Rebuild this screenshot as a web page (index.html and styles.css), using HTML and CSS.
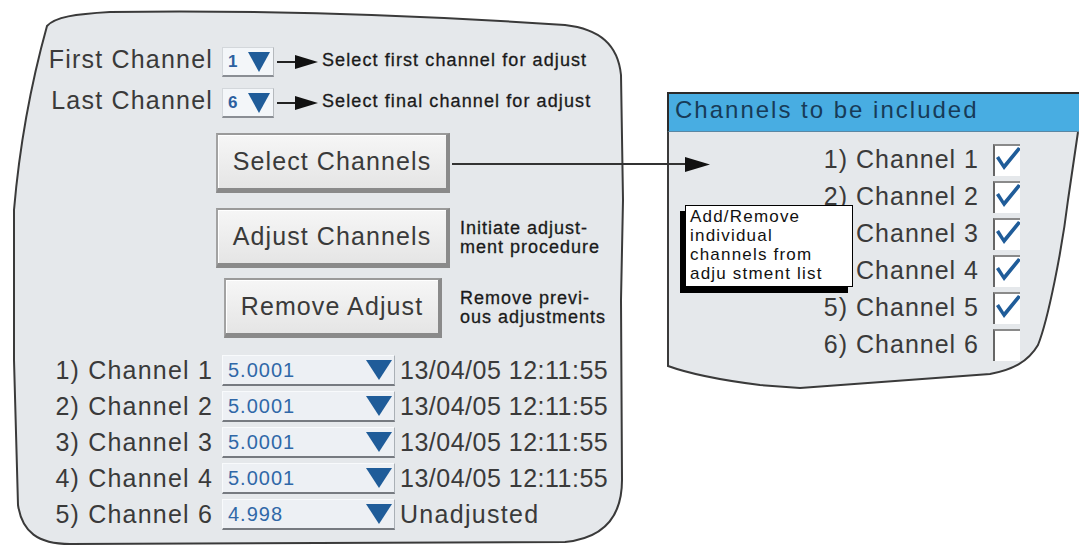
FILE: index.html
```html
<!DOCTYPE html>
<html lang="en">
<head>
    <meta charset="UTF-8">
    <meta name="viewport" content="width=device-width, initial-scale=1.0">
    <title>Adjust channels</title>
    <link rel="stylesheet" href="styles.css">
</head>
<body>
    <div class="screen">
        <section class="panel adjust">
            <svg class="outline" viewBox="12 10 614 537" preserveAspectRatio="none">
                <path d="M47 26 C55 17 75 14 110 12 C250 10 400 14 565 25 C600 29 618 45 621 75 L623 200 L621 300 L622 480 C622 515 605 538 565 542 L70 544 C38 544 22 532 18 505 L14 360 L14 210 C20 140 32 80 47 26 Z"/>
            </svg>

            <div class="pick-row">
                <span class="label">First Channel</span>
                <span class="pick"><b>1</b><i class="tri"></i></span>
                <svg class="arrow" width="41" height="14" viewBox="0 0 41 14"><line x1="0" y1="7" x2="22" y2="7"/><polygon points="18,0 41,7 18,14"/></svg>
                <span class="hint">Select first channel for adjust</span>
            </div>
            <div class="pick-row">
                <span class="label">Last Channel</span>
                <span class="pick"><b>6</b><i class="tri"></i></span>
                <svg class="arrow" width="41" height="14" viewBox="0 0 41 14"><line x1="0" y1="7" x2="22" y2="7"/><polygon points="18,0 41,7 18,14"/></svg>
                <span class="hint">Select final channel for adjust</span>
            </div>

            <div class="btn-row">
                <div class="btn-cell"><button class="btn">Select Channels</button></div>
            </div>
            <div class="btn-row">
                <div class="btn-cell"><button class="btn">Adjust Channels</button></div>
                <p class="note">Initiate adjust-<br>ment procedure</p>
            </div>
            <div class="btn-row tight">
                <div class="btn-cell"><button class="btn">Remove Adjust</button></div>
                <p class="note">Remove previ-<br>ous adjustments</p>
            </div>

            <div class="values">
                <div class="value-row">
                    <span class="label">1) Channel 1</span>
                    <span class="field"><span>5.0001</span><i class="tri big"></i></span>
                    <span class="stamp">13/04/05 12:11:55</span>
                </div>
                <div class="value-row">
                    <span class="label">2) Channel 2</span>
                    <span class="field"><span>5.0001</span><i class="tri big"></i></span>
                    <span class="stamp">13/04/05 12:11:55</span>
                </div>
                <div class="value-row">
                    <span class="label">3) Channel 3</span>
                    <span class="field"><span>5.0001</span><i class="tri big"></i></span>
                    <span class="stamp">13/04/05 12:11:55</span>
                </div>
                <div class="value-row">
                    <span class="label">4) Channel 4</span>
                    <span class="field"><span>5.0001</span><i class="tri big"></i></span>
                    <span class="stamp">13/04/05 12:11:55</span>
                </div>
                <div class="value-row">
                    <span class="label">5) Channel 6</span>
                    <span class="field"><span>4.998</span><i class="tri big"></i></span>
                    <span class="stamp wide">Unadjusted</span>
                </div>
            </div>
        </section>

        <section class="panel include">
            <svg class="outline" viewBox="667 92 412 300" preserveAspectRatio="none">
                <path class="fill" d="M668 132 L668 366 C690 374 720 380 760 385 L800 388 L990 374 C1012 370 1028 362 1038 345 C1048 320 1062 250 1068 200 L1078 132 Z"/>
                <path class="edge" d="M668 132 L668 366 C690 374 720 380 760 385 L800 388 L990 374 C1012 370 1028 362 1038 345 C1048 320 1062 250 1068 200 L1078 132"/>
            </svg>
            <h2 class="title">Channels to be included</h2>
            <ul class="checks">
                <li>1) Channel 1<span class="box"><svg viewBox="0 0 25 30" width="25" height="30"><polygon points="1,12 4,10 9,18 23,1 26,3 9,24"/></svg></span></li>
                <li>2) Channel 2<span class="box"><svg viewBox="0 0 25 30" width="25" height="30"><polygon points="1,12 4,10 9,18 23,1 26,3 9,24"/></svg></span></li>
                <li>3) Channel 3<span class="box"><svg viewBox="0 0 25 30" width="25" height="30"><polygon points="1,12 4,10 9,18 23,1 26,3 9,24"/></svg></span></li>
                <li>4) Channel 4<span class="box"><svg viewBox="0 0 25 30" width="25" height="30"><polygon points="1,12 4,10 9,18 23,1 26,3 9,24"/></svg></span></li>
                <li>5) Channel 5<span class="box"><svg viewBox="0 0 25 30" width="25" height="30"><polygon points="1,12 4,10 9,18 23,1 26,3 9,24"/></svg></span></li>
                <li>6) Channel 6<span class="box"></span></li>
            </ul>
            <div class="tip">Add/Remove<br>individual<br>channels from<br>adju stment list</div>
        </section>

        <!-- connector from Select Channels to the list -->
        <svg class="link" width="260" height="20" viewBox="0 0 260 20">
            <line x1="0" y1="9" x2="236" y2="9"/>
            <polygon points="233,2 258,9.5 233,17"/>
        </svg>
    </div>
</body>
</html>
```

FILE: styles.css
```css
body {
    margin: 0;
    background-color: #fff;
    font-family: "Liberation Sans", Arial, sans-serif;
    color: #3a3a3a;
}
.screen {
    position: relative;
    display: flex;
    align-items: flex-start;
    width: 1079px;
    height: 547px;
    overflow: hidden;
}
.panel {
    position: relative;
    z-index: 0;
    box-sizing: border-box;
    flex: none;
}
.outline {
    position: absolute;
    left: 0;
    top: 0;
    width: 100%;
    height: 100%;
    z-index: -1;
}
.outline path {
    fill: #e5e8eb;
    stroke: #3a3a3a;
    stroke-width: 2;
}
.outline .fill {
    stroke: none;
}
.outline .edge {
    fill: none;
}

/* left panel */
.adjust {
    width: 614px;
    height: 537px;
    margin: 10px 0 0 12px;
    padding-top: 37px;
}
.label {
    flex: none;
    width: 201px;
    text-align: right;
    font-size: 25px;
    letter-spacing: 1.2px;
    white-space: nowrap;
}
.pick-row {
    display: flex;
    align-items: center;
    height: 30px;
}
.pick-row + .pick-row {
    margin-top: 11px;
}
.pick-row .label {
    margin-bottom: 6px;
}
.pick {
    display: flex;
    align-items: center;
    justify-content: space-between;
    box-sizing: border-box;
    width: 52px;
    height: 30px;
    margin-left: 9px;
    padding: 0 3px 0 5px;
    background-color: #f3f6f9;
    border: 1px solid #d3d7db;
    border-right-color: #b5b9bd;
    border-bottom: 2px solid #8a8e94;
}
.pick b {
    color: #2c60a0;
    font-size: 17px;
}
.tri {
    width: 0;
    height: 0;
    border-left: 11px solid transparent;
    border-right: 11px solid transparent;
    border-top: 20px solid #1f5c99;
}
.tri.big {
    border-left-width: 13px;
    border-right-width: 13px;
}
.arrow {
    margin-left: 3px;
}
.arrow line {
    stroke: #222;
    stroke-width: 2;
}
.arrow polygon {
    fill: #111;
}
.hint {
    margin: 0 0 4px 4px;
    font-size: 18px;
    letter-spacing: 1.1px;
    color: #1a1a1a;
    -webkit-text-stroke: 0.3px #1a1a1a;
    white-space: nowrap;
}
.btn-row {
    display: flex;
    align-items: center;
    margin-top: 15px;
    padding-left: 194px;
}
.btn-row.tight {
    margin-top: 10px;
}
.btn-cell {
    flex: none;
    display: flex;
    justify-content: center;
    width: 254px;
}
.btn {
    box-sizing: border-box;
    height: 60px;
    padding: 0 15px;
    font-family: "Liberation Sans", Arial, sans-serif;
    font-size: 25px;
    letter-spacing: 1.1px;
    color: #3a3a3a;
    background: linear-gradient(#f6f6f6, #e5e5e5);
    border-style: solid;
    border-width: 2px 4px 5px 2px;
    border-color: #9a9a9a #8a8a8a #8a8a8a #a2a2a2;
    box-shadow: inset 1px 1px 0 #fff;
}
.note {
    margin: 0;
    font-size: 18px;
    line-height: 19px;
    letter-spacing: 1px;
    color: #1a1a1a;
    -webkit-text-stroke: 0.3px #1a1a1a;
}
.values {
    margin-top: 17px;
}
.value-row {
    display: flex;
    align-items: center;
    height: 31px;
}
.value-row + .value-row {
    margin-top: 5px;
}
.field {
    flex: none;
    display: flex;
    align-items: center;
    justify-content: space-between;
    box-sizing: border-box;
    width: 173px;
    height: 31px;
    margin-left: 9px;
    padding: 0 2px 0 5px;
    background-color: #edf0f4;
    border-top: 1px solid #f8fafc;
    border-left: 1px solid #f8fafc;
    border-right: 1px solid #aab0b6;
    border-bottom: 2px solid #767a80;
}
.field span {
    color: #3068a8;
    font-size: 20px;
    letter-spacing: 1px;
}
.stamp {
    margin-left: 5px;
    font-size: 25px;
    letter-spacing: 0.5px;
    white-space: nowrap;
}
.stamp.wide {
    letter-spacing: 1.3px;
}

/* right panel */
.include {
    width: 412px;
    height: 300px;
    margin: 92px 0 0 41px;
}
.title {
    box-sizing: border-box;
    height: 40px;
    margin: 0;
    padding-left: 6px;
    background-color: #48ade2;
    border-top: 2px solid #2b2b2b;
    border-left: 2px solid #2b2b2b;
    border-bottom: 1px solid #5b87a3;
    font-size: 24px;
    font-weight: normal;
    line-height: 31px;
    letter-spacing: 2px;
    color: #173b58;
}
.checks {
    list-style: none;
    margin: 0;
    padding: 9px 59px 0 0;
}
.checks li {
    display: flex;
    justify-content: flex-end;
    align-items: center;
    height: 37px;
    font-size: 25px;
    letter-spacing: 1px;
}
.box {
    box-sizing: border-box;
    width: 27px;
    height: 32px;
    margin-left: 14px;
    background-color: #fff;
    border-top: 2px solid #8a8a8a;
    border-left: 2px solid #666;
}
.box svg {
    display: block;
}
.box polygon {
    fill: #1f5c99;
}
.tip {
    position: absolute;
    left: 18px;
    top: 113px;
    box-sizing: border-box;
    width: 168px;
    height: 82px;
    padding: 1px 0 0 4px;
    background-color: #fff;
    border: 1px solid #000;
    box-shadow: -5px 6px 0 #000;
    font-size: 17px;
    line-height: 19px;
    letter-spacing: 1.2px;
    color: #111;
}
.link {
    position: absolute;
    left: 452px;
    top: 155px;
}
.link line {
    stroke: #333;
    stroke-width: 2;
}
.link polygon {
    fill: #111;
}
```
